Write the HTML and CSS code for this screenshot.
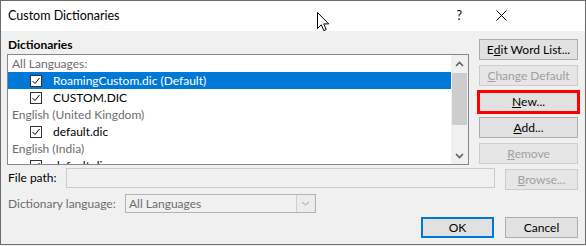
FILE: index.html
```html
<!DOCTYPE html>
<html>
<head>
<meta charset="utf-8">
<link rel="stylesheet" href="styles.css">
</head>
<body>
<div class="window">
  <div class="titlebar">
    <span class="title">Custom Dictionaries</span>
    <span class="help">?</span>
    <svg class="close" width="11" height="11" viewBox="0 0 11 11"><path d="M0.5 0.5 L10.5 10.5 M10.5 0.5 L0.5 10.5" stroke="#000" stroke-width="1" fill="none"/></svg>
  </div>
  <div class="client">
    <div class="top">
      <div class="left">
        <div class="group-label">Dictionaries</div>
        <div class="listbox">
          <div class="items">
            <div class="row header">All Languages:</div>
            <div class="row item selected"><span class="cb"><svg width="10" height="10" viewBox="0 0 10 10"><path d="M1.5 5 L4 7.5 L8.5 2" stroke="#000" stroke-width="1" fill="none"/></svg></span>RoamingCustom.dic (Default)</div>
            <div class="row item"><span class="cb"><svg width="10" height="10" viewBox="0 0 10 10"><path d="M1.5 5 L4 7.5 L8.5 2" stroke="#000" stroke-width="1" fill="none"/></svg></span>CUSTOM.DIC</div>
            <div class="row header">English (United Kingdom)</div>
            <div class="row item"><span class="cb"><svg width="10" height="10" viewBox="0 0 10 10"><path d="M1.5 5 L4 7.5 L8.5 2" stroke="#000" stroke-width="1" fill="none"/></svg></span>default.dic</div>
            <div class="row header">English (India)</div>
            <div class="row item"><span class="cb"><svg width="10" height="10" viewBox="0 0 10 10"><path d="M1.5 5 L4 7.5 L8.5 2" stroke="#000" stroke-width="1" fill="none"/></svg></span>default.dic</div>
          </div>
          <div class="scrollbar">
            <div class="sb-arrow"><svg width="9" height="6" viewBox="0 0 9 6"><path d="M1 5 L4.5 1.5 L8 5" stroke="#606060" stroke-width="1.6" fill="none"/></svg></div>
            <div class="sb-track"><div class="sb-thumb"></div></div>
            <div class="sb-arrow"><svg width="9" height="6" viewBox="0 0 9 6"><path d="M1 1 L4.5 4.5 L8 1" stroke="#606060" stroke-width="1.6" fill="none"/></svg></div>
          </div>
        </div>
      </div>
      <div class="buttons">
        <div class="btn">E<u>d</u>it Word List...</div>
        <div class="btn disabled"><u>C</u>hange Default</div>
        <div class="btn highlighted"><u>N</u>ew...</div>
        <div class="btn"><u>A</u>dd...</div>
        <div class="btn disabled"><u>R</u>emove</div>
      </div>
    </div>
    <div class="filerow">
      <span class="label">File path:</span>
      <div class="textbox"></div>
      <div class="btn disabled browse"><u>B</u>rowse...</div>
    </div>
    <div class="langrow">
      <span class="label grey">Dictionary lan<u>g</u>uage:</span>
      <div class="combo">
        <span class="combo-text">All Languages</span>
        <span class="combo-drop"><svg width="9" height="5" viewBox="0 0 9 5"><path d="M1 1 L4.5 4 L8 1" stroke="#a0a0a0" stroke-width="1" fill="none"/></svg></span>
      </div>
    </div>
    <div class="okrow">
      <div class="btn default">OK</div>
      <div class="btn">Cancel</div>
    </div>
  </div>
  <svg class="cursor" width="13" height="20" viewBox="0 0 13 20"><path d="M0.5 0.5 L0.5 16.5 L4.3 12.8 L6.8 18.6 L9.2 17.6 L6.8 11.9 L11.7 11.9 Z" fill="#fff" stroke="#000" stroke-width="1" stroke-linejoin="miter"/></svg>
</div>
</body>
</html>
```

FILE: styles.css
```css
* { box-sizing: border-box; }
html, body { margin: 0; padding: 0; }
body {
  width: 586px;
  height: 246px;
  background: #f0f0f0;
  font-family: Lato, "Liberation Sans", sans-serif;
  font-size: 12px;
  color: #000;
  overflow: hidden;
}
.window {
  position: relative;
  width: 586px;
  height: 245px;
  border: 1px solid #6b6b6b;
  display: flex;
  flex-direction: column;
  background: #f0f0f0;
}
.titlebar {
  height: 30px;
  background: #fff;
  display: flex;
  align-items: center;
  padding-left: 7px;
}
.title {
  font-size: 12.5px;
  flex: 1;
  padding-bottom: 1px;
}
.help {
  font-size: 12.5px;
  margin-right: 34px;
  padding-bottom: 1px;
}
.close {
  margin-right: 78px;
  margin-bottom: 1px;
}
.client {
  flex: 1;
  display: flex;
  flex-direction: column;
}
.top {
  display: flex;
  gap: 10px;
  padding: 0 7px 0 6px;
}
.left {
  width: 462px;
}
.group-label {
  font-weight: bold;
  height: 23px;
  line-height: 15px;
  padding-top: 6px;
  padding-left: 1px;
}
.listbox {
  height: 111px;
  border: 1px solid #828790;
  background: #fff;
  display: flex;
}
.items {
  flex: 1;
  overflow: hidden;
}
.row {
  height: 17px;
  line-height: 17px;
  white-space: nowrap;
}
.row.header {
  color: #6d6d6d;
  padding-left: 4px;
}
.row.item {
  display: flex;
  align-items: center;
  padding-left: 22px;
}
.row.selected {
  background: #0078d7;
  color: #fff;
}
.cb {
  width: 12px;
  height: 12px;
  border: 1px solid #333;
  background: #fff;
  margin-right: 11px;
  display: flex;
  align-items: center;
  justify-content: center;
}
.scrollbar {
  width: 17px;
  background: #f0f0f0;
  display: flex;
  flex-direction: column;
}
.sb-arrow {
  height: 17px;
  display: flex;
  align-items: center;
  justify-content: center;
}
.sb-track {
  flex: 1;
  padding: 1px 1px 0 1px;
}
.sb-thumb {
  height: 52px;
  background: #cdcdcd;
}
.buttons {
  width: 99px;
  padding-top: 8px;
  display: flex;
  flex-direction: column;
  gap: 5px;
}
.btn {
  position: relative;
  height: 21px;
  border: 1px solid #adadad;
  background: #e1e1e1;
  display: flex;
  align-items: center;
  justify-content: center;
  white-space: nowrap;
}
.btn.disabled {
  color: #a0a0a0;
  border-color: #cccccc;
  background: #e6e6e6;
}
.btn.highlighted::after {
  content: "";
  position: absolute;
  left: -3px;
  right: -3px;
  top: -2px;
  bottom: -3px;
  border: 3px solid #ff0000;
}
.btn.default {
  border-color: #0078d7;
  box-shadow: inset 0 0 0 1px #0078d7;
}
.filerow {
  display: flex;
  align-items: flex-start;
  margin-top: 3px;
  padding: 0 7px 0 6px;
}
.label {
  line-height: 20px;
  padding-left: 1px;
  white-space: nowrap;
}
.filerow .label { width: 59px; }
.textbox {
  width: 429px;
  height: 20px;
  border: 1px solid #cccccc;
  background: #f0f0f0;
}
.browse {
  width: 73px;
  margin-left: 10px;
  margin-top: 1px;
}
.langrow {
  display: flex;
  margin-top: 4px;
  padding: 0 6px;
}
.langrow .label {
  width: 118px;
  line-height: 19px;
}
.grey { color: #6d6d6d; }
.combo {
  width: 191px;
  height: 19px;
  border: 1px solid #b3b3b3;
  display: flex;
  color: #6d6d6d;
}
.combo-text {
  flex: 1;
  line-height: 17px;
  padding-left: 3px;
}
.combo-drop {
  width: 19px;
  border-left: 1px solid #cfcfcf;
  border-right: 1px solid #e6e6e6;
  display: flex;
  align-items: center;
  justify-content: center;
  background: #ececec;
}
.okrow {
  display: flex;
  justify-content: flex-end;
  gap: 11px;
  margin-top: 4px;
  padding: 0 7px;
}
.okrow .btn { width: 73px; }
.cursor {
  position: absolute;
  left: 316px;
  top: 11px;
}
```
